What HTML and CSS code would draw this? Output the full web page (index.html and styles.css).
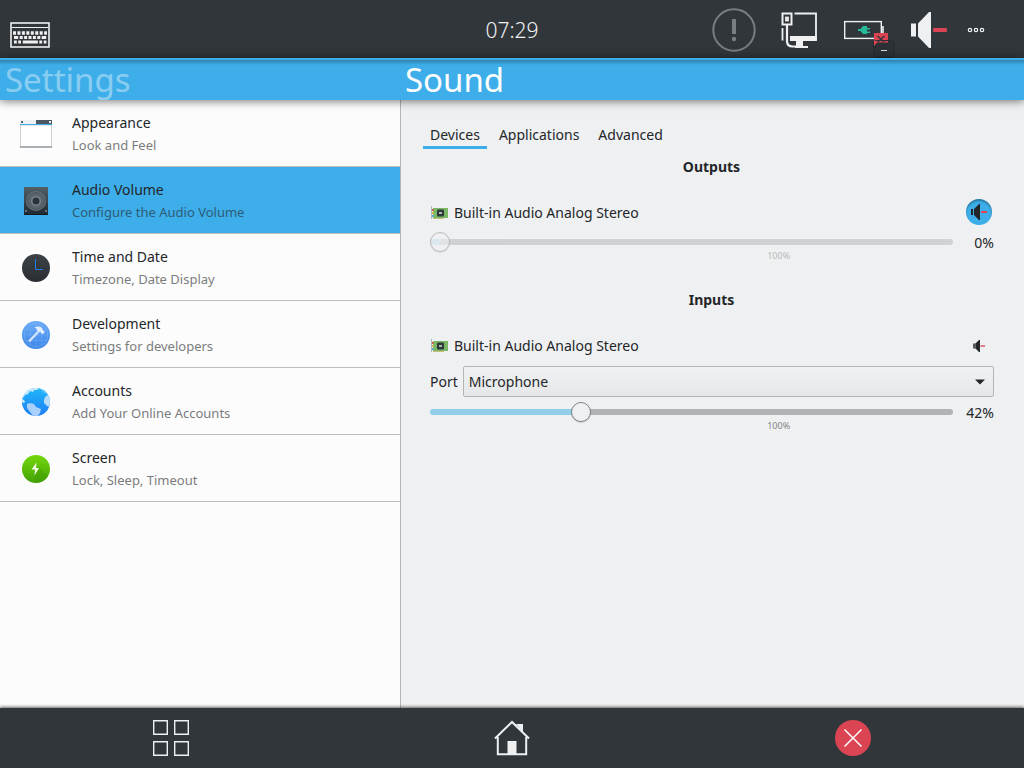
FILE: index.html
```html
<!DOCTYPE html>
<html lang="en">
<head>
<meta charset="utf-8">
<title>Settings - Sound</title>
<link rel="stylesheet" href="styles.css">
</head>
<body>
<header class="status-bar">
  <button class="icon-button keyboard" type="button" aria-label="Keyboard">
    <svg width="40" height="58" viewBox="0 0 40 58">
      <rect x="1" y="23" width="38" height="24" fill="none" stroke="#eff0f1" stroke-width="1.6"/>
      <path d="M2 27.5h36" stroke="#eff0f1" stroke-width="1.2"/>
      <g fill="none" stroke="#eff0f1">
        <path d="M3 33h34" stroke-width="3.4" stroke-dasharray="3 1.45"/>
        <path d="M4 37.5h4.2m1.5 0h3m1.4 0h3m1.4 0h3m1.4 0h3m1.4 0h3m1.4 0h4.5" stroke-width="3"/>
        <path d="M4 42h2.8m1.4 0h2.8m1.8 0h15m1.5 0h2.8m1.6 0h2.8" stroke-width="3.2"/>
      </g>
    </svg>
  </button>
  <time class="clock">07:29</time>
  <div class="tray">
    <button class="icon-button" type="button" aria-label="Notifications">
      <svg width="44" height="58" viewBox="0 0 44 58">
        <circle cx="22" cy="30" r="20.7" fill="none" stroke="#7a7e81" stroke-width="2"/>
        <path d="M20 19h4v15h-4z" fill="#7a7e81"/><circle cx="22" cy="39" r="2.2" fill="#7a7e81"/>
      </svg>
    </button>
    <button class="icon-button" type="button" aria-label="Network">
      <svg width="44" height="58" viewBox="0 0 44 58">
        <g fill="none" stroke="#eff0f1">
          <path d="M17.500 13.500h21.500V40" stroke-width="1.800"/>
          <rect x="5.500" y="13.500" width="9" height="11" stroke-width="2"/>
          <rect x="9" y="17.500" width="2" height="3" stroke-width="1.800"/>
          <path d="M10 25v16q0 5.500 5.500 5.500H19" stroke-width="2.200"/>
          <path d="M5.500 28v12.500" stroke-width="1.800"/>
        </g>
        <path d="M13 36h26.900v5H26v5h5v2H18v-2h1v-5h-6z" fill="#eff0f1"/>
      </svg>
    </button>
    <button class="icon-button" type="button" aria-label="Battery">
      <svg width="44" height="58" viewBox="0 0 44 58">
        <rect x="2.700" y="21.600" width="36.600" height="16.800" fill="none" stroke="#eff0f1" stroke-width="1.400"/>
        <path d="M41 26v8" stroke="#eff0f1" stroke-width="1.600"/>
        <path d="M16 29h2.500l2.500-3h4v2h3v1.500h-3v2h3v1.500h-3V34h-4l-2.500-3H16z" fill="#27b899"/>
        <rect x="32" y="33" width="14" height="8" fill="#da4453"/>
        <rect x="31.500" y="40.500" width="21" height="17" rx="3" fill="#2c3135" stroke="#282c30"/>
        <path d="M32 41h14v1.500H35l-3 3.500z" fill="#da4453"/>
        <path d="M35.500 36l3.500 3 3.500-3M36 42l3-3 3 3" fill="none" stroke="#31363b" stroke-width="1.500"/>
        <path d="M39 50.500h6" stroke="#dddfdd" stroke-width="1"/>
      </svg>
    </button>
    <button class="icon-button" type="button" aria-label="Volume muted">
      <svg width="44" height="58" viewBox="0 0 44 58">
        <path d="M4 23.500h5v13H4zM11 23.500L22 12h2v36h-2L11 36.500z" fill="#eff0f1"/>
        <rect x="26" y="28" width="14" height="4" rx="1" fill="#da4453"/>
      </svg>
    </button>
    <button class="icon-button more" type="button" aria-label="More">
      <svg width="18" height="58" viewBox="0 0 18 58">
        <g fill="none" stroke="#eff0f1" stroke-width="1.200"><circle cx="3" cy="30" r="1.700"/><circle cx="9" cy="30" r="1.700"/><circle cx="15" cy="30" r="1.700"/></g>
      </svg>
    </button>
  </div>
</header>

<div class="title-bar">
  <a class="title-back" href="#settings">Settings</a>
  <h1 class="title-page">Sound</h1>
</div>

<div class="content">
  <nav class="modules" aria-label="Settings">
    <a class="module" href="#appearance">
      <svg width="32" height="32" viewBox="0 0 32 32">
        <path d="M0 2h16v4H0z" fill="#eff0f1"/><path d="M16 2h16v4H16z" fill="#4d5761"/>
        <path d="M1 3h2v2H1z" fill="#5b656f"/><path d="M29 3h2v2h-2z" fill="#eff0f1"/>
        <rect x=".5" y="7" width="31" height="22" fill="#fff" stroke="#cdd1d4"/>
        <path d="M0 6h32v1H0z" fill="#3daee9"/><path d="M0 28h32v2H0z" fill="#abb0b4"/>
      </svg>
      <span class="module-text"><span class="module-name">Appearance</span><span class="module-note">Look and Feel</span></span>
    </a>
    <a class="module selected" href="#audio" aria-current="page">
      <svg width="32" height="32" viewBox="0 0 32 32">
        <defs><linearGradient id="box" x2="0" y2="1"><stop stop-color="#536069"/><stop offset="1" stop-color="#20282e"/></linearGradient></defs>
        <rect x="4" y="2" width="24" height="28" fill="url(#box)"/><path d="M4 29h24v1H4z" fill="#14191d"/>
        <circle cx="16" cy="16" r="10" fill="#68727a"/><circle cx="16" cy="16" r="9" fill="#47525a"/>
        <circle cx="16" cy="16" r="8" fill="#59646c"/><circle cx="16" cy="16" r="5" fill="#78838c"/><circle cx="16" cy="16" r="3.500" fill="#29323a"/>
        <circle cx="6" cy="26" r="1" fill="#6b85a8"/><circle cx="26" cy="26" r="1" fill="#6b85a8"/>
      </svg>
      <span class="module-text"><span class="module-name">Audio Volume</span><span class="module-note">Configure the Audio Volume</span></span>
    </a>
    <a class="module" href="#time">
      <svg width="32" height="32" viewBox="0 0 32 32">
        <defs><linearGradient id="clock" x2="0" y2="1"><stop stop-color="#3d4246"/><stop offset="1" stop-color="#2a2e32"/></linearGradient></defs>
        <circle cx="16" cy="16" r="14" fill="url(#clock)"/>
        <path d="M15.500 7v10.500H23" fill="none" stroke="#1d7ff0"/>
      </svg>
      <span class="module-text"><span class="module-name">Time and Date</span><span class="module-note">Timezone, Date Display</span></span>
    </a>
    <a class="module" href="#development">
      <svg width="32" height="32" viewBox="0 0 32 32">
        <defs><linearGradient id="dev" x2="0" y2="1"><stop stop-color="#6aabf5"/><stop offset="1" stop-color="#3c86ea"/></linearGradient></defs>
        <circle cx="16" cy="16" r="14" fill="url(#dev)"/>
        <g fill="none" stroke="#8dbef8" stroke-width=".6" opacity=".7"><circle cx="16" cy="16" r="11.800"/><path d="M6 10.500h20M4.500 16h23M6 21.500h20M10.500 6v20M16 4.500v23M21.500 6v20" opacity=".6"/></g>
        <path d="M9 22.500L19 12" stroke="#cfe3fc" stroke-width="2.400"/>
        <path d="M14.500 8.500Q19 6.500 22 9l1 2.500 2 1-2 2.800-2.200-1.300-.3-1.500-1.500.5-2-2q0-2-2.500-2.500z" fill="#e4effd"/>
      </svg>
      <span class="module-text"><span class="module-name">Development</span><span class="module-note">Settings for developers</span></span>
    </a>
    <a class="module" href="#accounts">
      <svg width="32" height="32" viewBox="0 0 32 32">
        <defs><linearGradient id="globe" x2="0" y2="1"><stop stop-color="#20b8fb"/><stop offset="1" stop-color="#1e7ef5"/></linearGradient>
        <clipPath id="disc"><circle cx="16" cy="16" r="14"/></clipPath></defs>
        <circle cx="16" cy="16" r="14" fill="url(#globe)"/>
        <g clip-path="url(#disc)">
          <path d="M3 9l7-7h9l-2 2h-3l-1 2-3-1-2 3-3 1-2 3z" fill="#c8e9fd"/>
          <path d="M2 13l2 1 1 2-1 1-2-1z" fill="#c8e9fd"/>
          <path d="M20 3l5 1 2 4-3-1z" fill="#55c3f9"/>
          <path d="M7 18l3-1 4 1 2 3 5 2-1 4-3 4-4-1-3-4-3-4z" fill="#a9d0fb"/>
          <path d="M24 14q1-4 4-5h2v12l-3-1-3-3z" fill="#b9dcfb"/>
        </g>
      </svg>
      <span class="module-text"><span class="module-name">Accounts</span><span class="module-note">Add Your Online Accounts</span></span>
    </a>
    <a class="module" href="#screen">
      <svg width="32" height="32" viewBox="0 0 32 32">
        <defs><linearGradient id="power" x2="0" y2="1"><stop stop-color="#75d80b"/><stop offset="1" stop-color="#42a206"/></linearGradient></defs>
        <circle cx="16" cy="16" r="14" fill="url(#power)"/>
        <path d="M18 13l10 10q-4 6-11 7l-2-8z" fill="#3c9a05" opacity=".35"/>
        <path d="M16.500 9.500l-5 7H15l-.5 6 4.500-7.500h-3z" fill="#f4ffe8"/>
      </svg>
      <span class="module-text"><span class="module-name">Screen</span><span class="module-note">Lock, Sleep, Timeout</span></span>
    </a>
  </nav>

  <main class="page">
    <div class="tabs" role="tablist">
      <button class="tab active" type="button" role="tab" aria-selected="true">Devices</button>
      <button class="tab" type="button" role="tab" aria-selected="false">Applications</button>
      <button class="tab" type="button" role="tab" aria-selected="false">Advanced</button>
    </div>

    <section class="group">
      <h2 class="group-title">Outputs</h2>
      <div class="device muted">
        <div class="device-head">
          <svg width="18" height="16" viewBox="0 0 18 16">
            <path d="M3 3h15v10H3z" fill="#7cb768"/><path d="M3 13h11v1H3z" fill="#c9bd7a"/>
            <path d="M1.500 1v13" stroke="#a9b8bf" stroke-width="1"/>
            <path d="M2 4h1.500v2H2z" fill="#d55348"/><path d="M2 7h1.500v2H2z" fill="#e6b43f"/><path d="M2 10h1.500v2H2z" fill="#5ba5d6"/>
            <rect x="7" y="4.500" width="7" height="7" rx="1" fill="#2c3b39"/><rect x="9" y="7" width="3" height="2" fill="#aab8b4"/>
          </svg>
          <label class="device-name" for="output-volume">Built-in Audio Analog Stereo</label>
          <button class="mute on" type="button" aria-label="Unmute output" aria-pressed="true">
            <svg width="16" height="16" viewBox="0 0 16 16"><path d="M0 5h2v6H0zM3 5l5-5h1v16H8l-5-5z" fill="#232629"/><path d="M10 7h6v2h-6z" fill="#da4453"/></svg>
          </button>
        </div>
        <div class="volume">
          <input class="slider" id="output-volume" type="range" min="0" max="150" value="0" style="--fill: 2%">
          <output class="volume-value" for="output-volume">0%</output>
          <div class="scale"><span class="scale-mark">100%</span></div>
        </div>
      </div>
    </section>

    <section class="group">
      <h2 class="group-title">Inputs</h2>
      <div class="device">
        <div class="device-head">
          <svg width="18" height="16" viewBox="0 0 18 16">
            <path d="M3 3h15v10H3z" fill="#7cb768"/><path d="M3 13h11v1H3z" fill="#c9bd7a"/>
            <path d="M1.500 1v13" stroke="#a9b8bf" stroke-width="1"/>
            <path d="M2 4h1.500v2H2z" fill="#d55348"/><path d="M2 7h1.500v2H2z" fill="#e6b43f"/><path d="M2 10h1.500v2H2z" fill="#5ba5d6"/>
            <rect x="7" y="4.500" width="7" height="7" rx="1" fill="#2c3b39"/><rect x="9" y="7" width="3" height="2" fill="#aab8b4"/>
          </svg>
          <label class="device-name" for="input-volume">Built-in Audio Analog Stereo</label>
          <button class="mute" type="button" aria-label="Mute input" aria-pressed="false">
            <svg width="12" height="12" viewBox="0 0 12 12"><path d="M0 3.500h2.500v5H0z" fill="#55585b"/><path d="M2.500 3.500L6 0h1v12H6L2.500 8.500z" fill="#232629"/><path d="M7.500 5.200H12v1.600H7.500z" fill="#e0616d"/></svg>
          </button>
        </div>
        <div class="port">
          <label for="port">Port</label>
          <select class="port-select" id="port"><option>Microphone</option></select>
          <svg class="port-arrow" width="10" height="6" viewBox="0 0 10 6"><path d="M0 .5h10L5 5.500z" fill="#232629"/></svg>
        </div>
        <div class="volume">
          <input class="slider" id="input-volume" type="range" min="0" max="150" value="42" style="--fill: 29%">
          <output class="volume-value" for="input-volume">42%</output>
          <div class="scale"><span class="scale-mark">100%</span></div>
        </div>
      </div>
    </section>
  </main>
</div>

<footer class="nav-bar">
  <button class="icon-button" type="button" aria-label="Applications">
    <svg width="36" height="36" viewBox="0 0 36 36"><g fill="none" stroke="#eff0f1" stroke-width="1.400"><path d="M.7.700h13.600v13.600H.700zM21.700.700h13.600v13.600H21.700zM.7 21.700h13.600v13.600H.700zM21.700 21.700h13.600v13.600H21.700z"/></g></svg>
  </button>
  <button class="icon-button" type="button" aria-label="Home">
    <svg width="36" height="36" viewBox="0 0 36 36"><path d="M1 18.500L18 2l17 16.500M3.800 17v17.200h28.400V17" fill="none" stroke="#eff0f1" stroke-width="2"/><path d="M22 4h7v8zM13.500 21h9v13h-9z" fill="#eff0f1"/></svg>
  </button>
  <button class="icon-button" type="button" aria-label="Close">
    <svg width="36" height="36" viewBox="0 0 36 36"><circle cx="18" cy="18" r="18" fill="#da4453"/><path d="M9.500 9.500l17 17M26.500 9.500l-17 17" stroke="#fff" stroke-width="1.500"/></svg>
  </button>
</footer>
</body>
</html>
```

FILE: styles.css
```css
* {
  box-sizing: border-box;
}

body {
  display: flex;
  flex-direction: column;
  min-height: 100vh;
  margin: 0;
  background: #eff0f1;
  color: #232629;
  font: 14px/24px "Noto Sans", sans-serif;
}

button,
select {
  margin: 0;
  color: inherit;
  font: inherit;
}

a {
  color: inherit;
  text-decoration: none;
}

svg {
  display: block;
  flex: none;
}

.icon-button {
  padding: 0;
  border: 0;
  background: none;
}

.status-bar {
  display: grid;
  grid-template-columns: 1fr auto 1fr;
  align-items: center;
  height: 58px;
  padding: 0 10px;
  background: #31363b;
}

.keyboard {
  justify-self: start;
}

.clock {
  padding-top: 2px;
  color: #eff0f1;
  font-size: 21px;
  font-weight: 300;
}

.tray {
  display: flex;
  justify-self: end;
  gap: 21px;
  padding-right: 29px;
}

.tray svg {
  overflow: visible;
}

.more {
  margin-left: -5px;
}

.title-bar {
  position: relative;
  display: flex;
  height: 42px;
  background: linear-gradient(#3daee9 2px, #2f81ac 2px, #3daee9 7px);
  box-shadow: 0 1px 9px rgba(0, 0, 0, 0.55);
  color: #fcfcfc;
  font-size: 33px;
  line-height: 44px;
}

.title-back {
  width: 400px;
  padding-left: 5px;
  opacity: 0.4;
}

.title-page {
  margin: 0;
  padding-left: 5px;
  font: inherit;
}

.content {
  display: flex;
  flex: 1;
}

.modules {
  width: 400px;
  background: #fcfcfc;
}

.module {
  display: flex;
  align-items: center;
  gap: 20px;
  height: 67px;
  padding: 2px 20px 0;
  border-bottom: 1px solid #bcbdbd;
}

.module.selected {
  background: #3daee9;
}

.module-text {
  display: flex;
  flex-direction: column;
  line-height: 23px;
}

.module-note {
  font-size: 13px;
  opacity: 0.6;
}

.page {
  flex: 1;
  padding: 22px 24px 22px 22px;
  border-left: 1px solid #b3b5b6;
}

.tabs {
  display: flex;
  gap: 5px;
  margin-bottom: 6px;
}

.tab {
  padding: 2px 7px 0;
  border: 0;
  border-bottom: 3px solid transparent;
  background: none;
  line-height: 22px;
}

.tab.active {
  border-bottom-color: #3daee9;
}

.group {
  margin-bottom: 26px;
}

.group-title {
  margin: 0 0 20px;
  font-size: 14px;
  font-weight: 700;
  line-height: 24px;
  text-align: center;
}

.device {
  display: flex;
  flex-direction: column;
  gap: 5px;
  padding: 0 6px 0 7px;
}

.device-head {
  display: flex;
  align-items: center;
  gap: 6px;
  height: 28px;
}

.device-name {
  flex: 1;
}

.mute {
  display: flex;
  align-items: center;
  justify-content: center;
  width: 30px;
  height: 26px;
  padding: 0;
  border: 0;
  border-radius: 13px;
  background: none;
}

.mute.on {
  width: 26px;
  margin: 0 2px 2px 0;
  background: #3daee9;
  box-shadow: inset 0 2px 2px rgba(0, 0, 0, 0.3);
}

.port {
  display: grid;
  grid-template-columns: auto 1fr 28px;
  align-items: center;
  margin-top: 1px;
}

.port-select {
  grid-area: 1 / 2 / 2 / 4;
  height: 31px;
  margin-left: 5px;
  padding: 0 5px;
  border: 1px solid #b3b5b7;
  border-radius: 2px;
  background: linear-gradient(#f0f1f2, #e6e7e8);
  appearance: none;
}

.port-arrow {
  grid-area: 1 / 3 / 2 / 4;
  justify-self: center;
  pointer-events: none;
  z-index: 1;
}

.volume {
  display: grid;
  grid-template-columns: 1fr 41px;
}

.slider {
  width: 100%;
  height: 20px;
  margin: 0;
  background: none;
  appearance: none;
}

.slider::-webkit-slider-runnable-track {
  height: 6px;
  border-radius: 3px;
  background: linear-gradient(to right, #93cee9 var(--fill), #b1b3b5 var(--fill));
}

.slider::-webkit-slider-thumb {
  width: 20px;
  height: 20px;
  margin-top: -7px;
  border: 1px solid #7f8386;
  border-radius: 50%;
  background: #eff0f1;
  box-shadow: 0 1px 1px rgba(0, 0, 0, 0.15);
  appearance: none;
}

.muted .slider,
.muted .scale-mark {
  opacity: 0.5;
}

.muted .slider::-webkit-slider-thumb {
  background: rgba(239, 240, 241, 0.6);
}

.volume-value {
  height: 20px;
  line-height: 22px;
  text-align: right;
}

/* The slider runs to 150%, so the 100% mark is centred at two thirds. */
.scale {
  display: grid;
  grid-template-columns: 2fr 0 1fr;
  justify-items: center;
  margin-top: -2px;
  font-size: 9px;
  line-height: 12px;
}

.scale-mark {
  grid-column: 2;
  color: #7f8386;
}

.nav-bar {
  position: relative;
  display: grid;
  grid-template-columns: repeat(3, 1fr);
  place-items: center;
  height: 60px;
  background: #31363b;
  box-shadow: 0 -1px 3px rgba(0, 0, 0, 0.6);
}
```
